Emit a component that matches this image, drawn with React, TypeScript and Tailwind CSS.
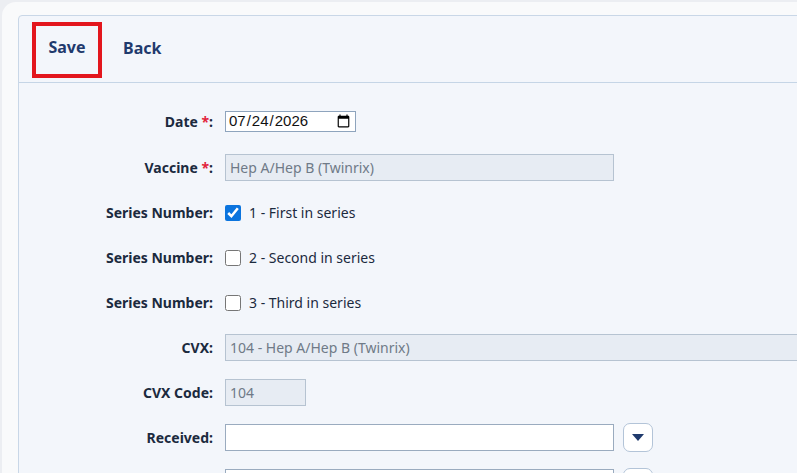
import { useState } from "react";

type Row = { label: string; required?: boolean };

function FieldLabel({ label, required }: Row) {
    return (
        <div className="w-[194px] shrink-0 text-right text-[14px] font-bold text-[#1b2a3e]">
            {label}
            {required && <span className="text-[#e2243c]"> *</span>}
            {label && ":"}
        </div>
    );
}

function SeriesRow({ id, text, checked, onToggle }: { id: string; text: string; checked: boolean; onToggle: () => void }) {
    return (
        <div className="flex items-center h-[45px] gap-3">
            <FieldLabel label="Series Number" />
            <label htmlFor={id} className="flex items-center gap-2 text-[14px] text-[#1b2a3e]">
                <input id={id} type="checkbox" checked={checked} onChange={onToggle} className="m-0 w-4 h-4 accent-[#0b74de]" />
                {text}
            </label>
        </div>
    );
}

function DropdownButton() {
    return (
        <button className="ml-[-3px] flex items-center justify-center w-[30px] h-[29px] rounded-[7px] border border-[#b3c4d8] bg-white">
            <svg width="12" height="7" viewBox="0 0 12 7">
                <path d="M0 0 H12 L6 7 Z" fill="#1f3a6d" />
            </svg>
        </button>
    );
}

export default function App() {
    const [series, setSeries] = useState([true, false, false]);
    const [date, setDate] = useState("2026-07-24");
    const [received, setReceived] = useState("");

    const toggle = (i: number) => setSeries(prev => prev.map((v, idx) => (idx === i ? !v : v)));

    return (
        <div className="w-[797px] h-[473px] overflow-hidden bg-[#eceef2] font-['Noto_Sans',sans-serif]">
            <div className="ml-[2px] mt-[2px] h-full rounded-tl-[14px] bg-[#f9fafb] pl-[16px] pt-[13px]">
                <div className="h-full w-[900px] rounded-tl-[4px] border border-[#c9d7e7] bg-[#f3f6fb]">

                    {/* toolbar */}
                    <div className="flex items-center h-[67px] border-b border-[#c5d5e6] pl-[13px]">
                        <button className="mt-[2px] flex items-center justify-center w-[70px] h-[56px] border-4 border-[#e3161d] pb-[7px] text-[16px] font-bold text-[#1f3a6d]">
                            Save
                        </button>
                        <button className="ml-[21px] pb-[3px] text-[16px] font-bold text-[#1f3a6d]">Back</button>
                    </div>

                    {/* form */}
                    <div className="pt-[14px]">
                        <div className="flex items-center h-[48px] gap-3">
                            <FieldLabel label="Date" required />
                            <input
                                type="date"
                                value={date}
                                onChange={e => setDate(e.target.value)}
                                className="w-[131px] h-[21px] border border-[#8ea4bd] bg-white pl-[2px] pr-[2px] text-[15px] text-[#111] font-['Liberation_Sans',sans-serif]"
                            />
                        </div>

                        <div className="flex items-center h-[45px] gap-3">
                            <FieldLabel label="Vaccine" required />
                            <input
                                type="text"
                                disabled
                                value="Hep A/Hep B (Twinrix)"
                                className="w-[389px] h-[27px] border border-[#b6c3d1] bg-[#e7ecf3] px-[4px] text-[14px] text-[#6f7a87]"
                            />
                        </div>

                        <SeriesRow id="series-1" text="1 - First in series" checked={series[0]} onToggle={() => toggle(0)} />
                        <SeriesRow id="series-2" text="2 - Second in series" checked={series[1]} onToggle={() => toggle(1)} />
                        <SeriesRow id="series-3" text="3 - Third in series" checked={series[2]} onToggle={() => toggle(2)} />

                        <div className="flex items-center h-[45px] gap-3">
                            <FieldLabel label="CVX" />
                            <input
                                type="text"
                                disabled
                                value="104 - Hep A/Hep B (Twinrix)"
                                className="w-[660px] h-[27px] border border-[#b6c3d1] bg-[#e7ecf3] px-[4px] text-[14px] text-[#6f7a87]"
                            />
                        </div>

                        <div className="flex items-center h-[45px] gap-3">
                            <FieldLabel label="CVX Code" />
                            <input
                                type="text"
                                disabled
                                value="104"
                                className="w-[81px] h-[27px] border border-[#b6c3d1] bg-[#e7ecf3] px-[4px] text-[14px] text-[#6f7a87]"
                            />
                        </div>

                        <div className="flex items-center h-[45px] gap-3">
                            <FieldLabel label="Received" />
                            <input
                                type="text"
                                value={received}
                                onChange={e => setReceived(e.target.value)}
                                className="w-[389px] h-[27px] border border-[#9aabbf] bg-white px-[4px] text-[14px] text-[#1b2a3e]"
                            />
                            <DropdownButton />
                        </div>

                        <div className="flex items-center h-[45px] gap-3">
                            <FieldLabel label="" />
                            <input type="text" className="w-[389px] h-[27px] border border-[#9aabbf] bg-white px-[4px] text-[14px]" />
                            <DropdownButton />
                        </div>
                    </div>
                </div>
            </div>
        </div>
    );
}
